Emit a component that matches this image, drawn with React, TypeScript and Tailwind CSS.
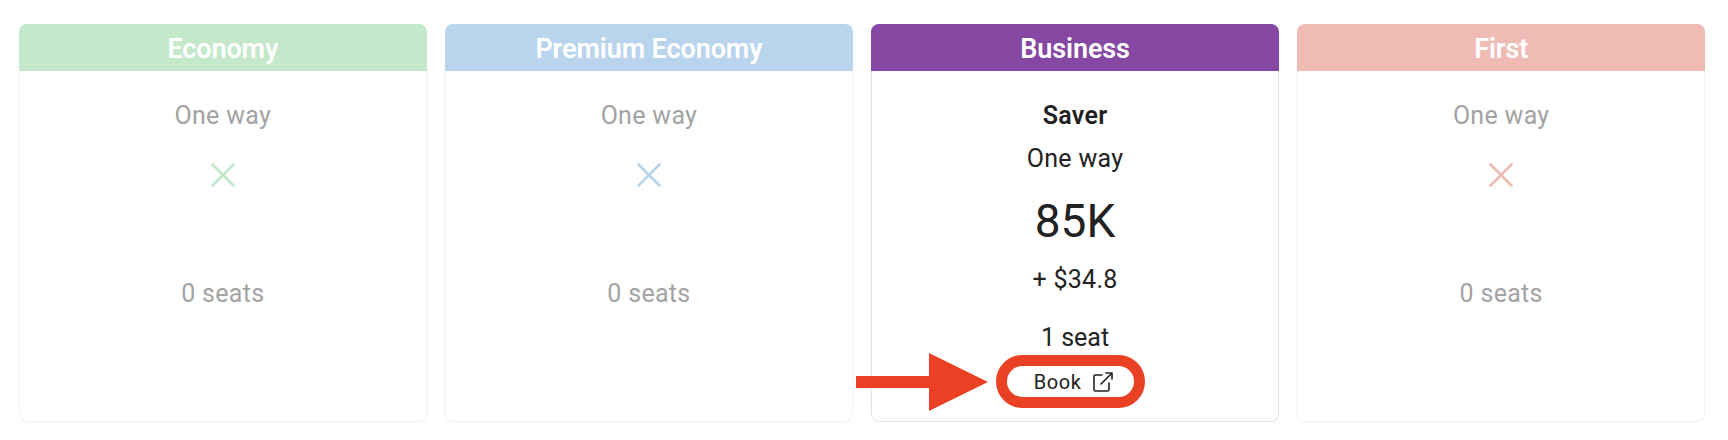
import React from 'react';
import { X } from 'lucide-react';

const cabins = [
  { name: 'Economy', head: 'bg-[#c4e8ca]', cross: 'text-[#c4e8ca]' },
  { name: 'Premium Economy', head: 'bg-[#b9d5ee]', cross: 'text-[#b9d5ee]' },
  { name: 'Business', head: 'bg-[#8648a3]', cross: '' },
  { name: 'First', head: 'bg-[#efbcb5]', cross: 'text-[#efbcb5]' },
];

function BookIcon() {
  return (
    <svg width="22" height="22" viewBox="0 0 22 22" fill="none" stroke="#222" strokeWidth="1.6" strokeLinecap="round" strokeLinejoin="round">
      <path d="M10 4H3.5A1.5 1.5 0 0 0 2 5.500V18.500A1.500 1.500 0 0 0 3.500 20H15.500A1.500 1.500 0 0 0 17 18.500V12" />
      <path d="M9 13L20 2M14 2H20V8" />
    </svg>
  );
}

function Arrow() {
  return (
    <svg className="absolute left-[-140px] top-[-2px]" width="132" height="58" viewBox="0 0 132 58" fill="#ea4125">
      <path d="M0 23H73V0L132 29L73 58V35H0Z" />
    </svg>
  );
}

function EmptyCabin({ cross }: { cross: string }) {
  return (
    <div className="flex flex-col items-center text-[#a3a3a3]">
      <div className="leading-[32px]">One way</div>
      <X size={42} strokeWidth={1.6} className={`mt-[22px] ${cross}`} />
      <div className="mt-[82px] leading-[32px]">0 seats</div>
    </div>
  );
}

function SaverCabin() {
  return (
    <div className="flex flex-col items-center text-[#222222]">
      <div className="font-semibold leading-[32px]">Saver</div>
      <div className="mt-[11px] leading-[32px]">One way</div>
      <div className="mt-[16px] text-[46px] leading-[60px] tracking-normal">85K</div>
      <div className="mt-[13px] leading-[32px]">+ $34.8</div>
      <div className="mt-[26px] leading-[32px] tracking-normal">1 seat</div>
      <div className="relative mr-[10px] mt-[1px]">
        <Arrow />
        <button className="flex h-[53px] w-[149px] items-center justify-center gap-[11px] rounded-full border-[11px] border-[#ea4125] bg-white pl-[8px] text-[20px] tracking-[0.6px]">
          Book
          <BookIcon />
        </button>
      </div>
    </div>
  );
}

export default function App() {
  return (
    <div className="h-[440px] w-[1728px] bg-white pl-[19px] pt-[24px] font-['Roboto',sans-serif] text-[25px] tracking-[0.3px]">
      <div className="grid h-[398px] w-[1686px] grid-cols-4 gap-[18.5px]">
        {cabins.map(cabin => {
          const isBusiness = cabin.name === 'Business';
          const edge = isBusiness ? 'border-[#e4e4e4]' : 'border-[#f2f2f2]';
          return (
            <div key={cabin.name} className="flex flex-col">
              <div className={`h-[47px] rounded-t-[8px] pt-[3px] text-center text-[27px] font-semibold leading-[45px] tracking-[-0.1px] text-white ${cabin.head}`}>
                {cabin.name}
              </div>
              <div className={`flex-1 rounded-b-[8px] border-x border-b pt-[29px] ${edge}`}>
                {isBusiness ? <SaverCabin /> : <EmptyCabin cross={cabin.cross} />}
              </div>
            </div>
          );
        })}
      </div>
    </div>
  );
}
